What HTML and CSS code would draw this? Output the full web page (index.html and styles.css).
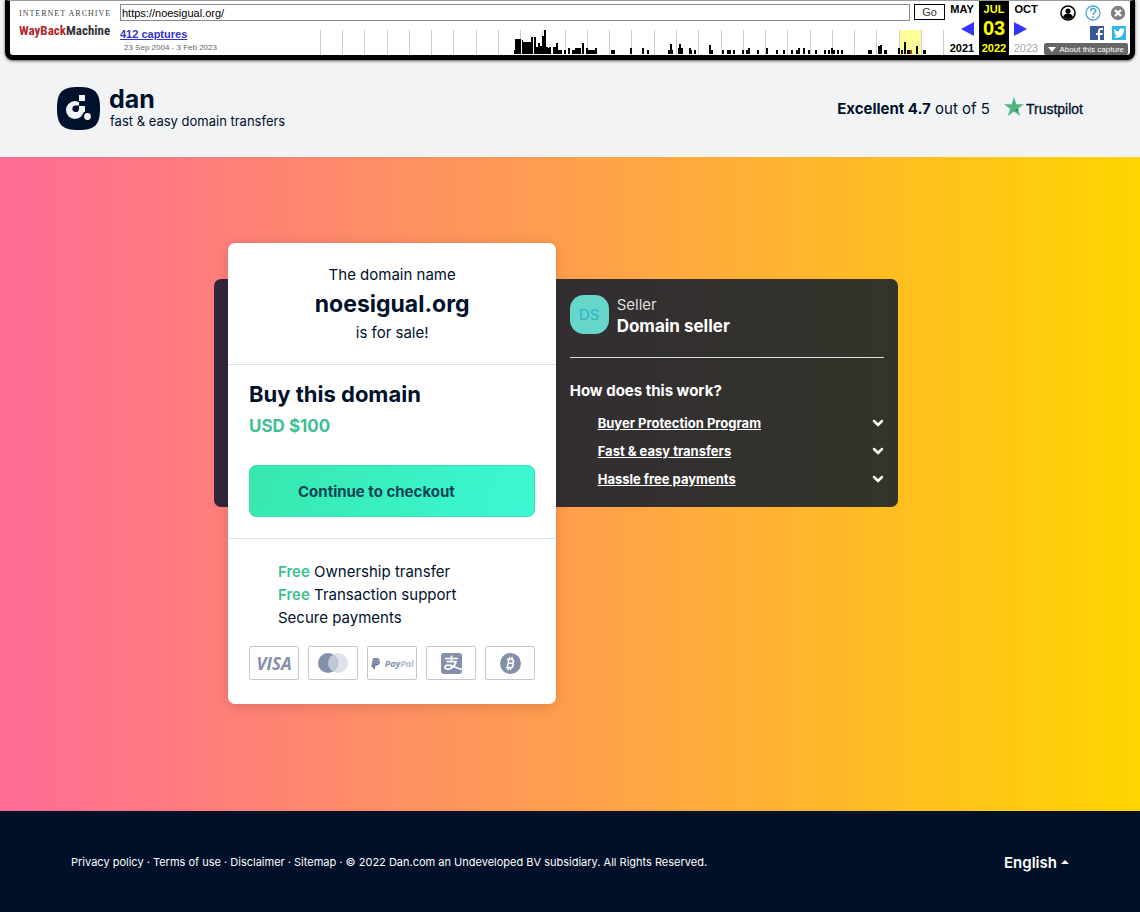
FILE: index.html
```html
<!DOCTYPE html>
<html lang="en">
<head>
    <meta charset="UTF-8">
    <meta name="viewport" content="width=device-width, initial-scale=1.0">
    <title>noesigual.org is for sale</title>
    <link rel="stylesheet" href="styles.css">
</head>
<body>
  <div class="wayback">
    <a class="wb-logo" href="#">
      <span class="wb-small">INTERNET ARCHIVE</span>
      <span class="wb-name"><span class="red">WayBack</span>Machine</span>
    </a>
    <div class="wb-middle">
      <form class="wb-form">
        <input type="text" aria-label="URL" value="https://noesigual.org/">
        <button type="button">Go</button>
      </form>
      <div class="wb-row">
        <div class="captures">
          <a href="#">412 captures</a>
          <span>23 Sep 2004 - 3 Feb 2023</span>
        </div>
        <svg class="spark" viewBox="0 0 625 25" preserveAspectRatio="none">
          <path fill="#ffff99" d="M579 0h22v25h-22z"/>
          <path fill="#ccc" d="M0 0h1v25h-1zM22 0h1v25h-1zM44 0h1v25h-1zM67 0h1v25h-1zM89 0h1v25h-1zM111 0h1v25h-1zM133 0h1v25h-1zM156 0h1v25h-1zM178 0h1v25h-1zM200 0h1v25h-1zM222 0h1v25h-1zM245 0h1v25h-1zM267 0h1v25h-1zM289 0h1v25h-1zM311 0h1v25h-1zM334 0h1v25h-1zM356 0h1v25h-1zM378 0h1v25h-1zM401 0h1v25h-1zM423 0h1v25h-1zM445 0h1v25h-1zM467 0h1v25h-1zM490 0h1v25h-1zM512 0h1v25h-1zM534 0h1v25h-1zM556 0h1v25h-1zM579 0h1v25h-1zM601 0h1v25h-1zM623 0h1v25h-1z"/>
          <path d="M194 24v-4h1v-11h6v15zM202 24v-14h1v2h8v-5h2v17zM214 24v-17h2v10h2v-4h2v3h2v-10h2v-6h2v17h2v1h1v-1h2v7zM233 24v-7h3v-4h2v7h4v4zM244 24v-4h2v4zM248 24v-6h2v6zM252 24v-4h3v-2h6v6zM262 24v-11h2v11zM266 24v-6h2v2h7v-2h2v6zM291 24v-4h4v4z"/>
          <path d="M310 24v-6h2v6zM322 24v-6h2v6zM327 24v-4h2v4zM348 24v-4h2v-6h2v6h1v4zM358 24v-6h1v-4h2v4h2v6zM369 24v-6h2v2h1v4zM374 24v-4h2v4zM389 24v-9h2v5h2v4zM402 24v-4h2v4zM407 24v-4h4v4zM413 24v-4h2v4zM422 24v-4h2v4zM426 24v-4h2v-2h2v6zM437 24v-4h2v4zM446 24v-6h2v6zM456 24v-4h2v4zM463 24v-4h2v4zM471 24v-4h2v4zM476 24v-4h2v-2h2v6zM483 24v-6h2v6zM488 24v-4h2v4zM495 24v-4h2v4zM504 24v-4h2v4zM508 24v-4h2v4zM511 24v-6h2v2h2v4zM517 24v-4h2v4zM521 24v-4h2v4z"/>
          <path d="M548 24v-4h4v4zM558 24v-8h2v-1h2v9zM564 24v-4h3v4zM578 24v-6h2v6zM581 24v-4h2v4zM584 24v-12h2v12zM587 24v-4h3v4zM596 24v-8h2v8zM603 24v-4h3v4z"/>
          <path fill="#c0392b" d="M590 24v-4h2v4z"/>
        </svg>
      </div>
    </div>
    <table class="wb-dates">
      <tr><td>MAY</td><td class="now">JUL</td><td>OCT</td></tr>
      <tr class="day">
        <td class="prev"><svg width="13" height="14" viewBox="0 0 13 14"><path fill="#33f" d="M13 0v14L0 7z"/></svg></td>
        <td class="now">03</td>
        <td class="next"><svg width="13" height="14" viewBox="0 0 13 14"><path fill="#33f" d="M0 0v14l13-7z"/></svg></td>
      </tr>
      <tr><td>2021</td><td class="now">2022</td><td class="off">2023</td></tr>
    </table>
    <div class="wb-tools">
      <div class="tool-row top">
        <svg width="16" height="16" viewBox="0 0 16 16"><circle cx="8" cy="8" r="7" fill="#fff" stroke="#000" stroke-width="1.6"/><circle cx="8" cy="6" r="2.6"/><path d="M3 12c1-3 3-3.500 5-3.500s4 .5 5 3.500c-2.500 2.600-7.500 2.600-10 0z"/></svg>
        <svg width="16" height="16" viewBox="0 0 16 16"><circle cx="8" cy="8" r="7" fill="none" stroke="#4da6dc" stroke-width="1.300"/><path d="M5.500 6.300c0-3.600 5.200-3.400 5.200-.5 0 2-2.600 1.900-2.600 4.200" fill="none" stroke="#4da6dc" stroke-width="1.500"/><circle cx="8.100" cy="12" r="1" fill="#4da6dc"/></svg>
        <svg width="16" height="16" viewBox="0 0 16 16"><circle cx="8" cy="8" r="7.200" fill="#808080"/><path d="M5 5l6 6M11 5l-6 6" stroke="#fff" stroke-width="2.400"/></svg>
      </div>
      <div class="tool-row">
        <svg width="14" height="14" viewBox="0 0 14 14"><path fill="#3b5998" d="M0 0h14v14H0z"/><path fill="#fff" d="M8 14V9H6V7h2V5c0-2 1.200-3 3-3h2v2h-1.500C10.300 4 10 4.300 10 5.300V7h2.800l-.4 2H10v5z"/></svg>
        <svg width="14" height="14" viewBox="0 0 14 14"><path fill="#2fb8e8" d="M0 0h14v14H0z"/><path fill="#fff" d="M2 3c1.300 1.500 3 2.300 5 2.300C6.800 3.300 8 2.200 9.300 2.200c.8 0 1.300.3 1.800.8l1.500-.6-.9 1.400 1.200-.3-1.200 1.300C11.700 8.800 9 11.800 5.300 11.800c-1.400 0-2.700-.4-3.600-1 1.400.1 2.500-.3 3.500-1-1.100-.1-1.900-.7-2.200-1.700h1.100C2.900 7.700 2.200 6.800 2.200 5.700l1 .3C2 5.200 1.700 4 2 3z"/></svg>
      </div>
      <a class="about" href="#"><svg width="8" height="5" viewBox="0 0 8 5"><path fill="#fff" d="M0 0h8L4 5z"/></svg>About this capture</a>
    </div>
  </div>

  <header class="header">
    <a class="brand" href="#">
      <svg width="43" height="43" viewBox="0 0 43 43">
        <path fill="#00112c" d="M21.500 0C38 0 43 5 43 21.500S38 43 21.500 43 0 38 0 21.500 5 0 21.500 0z"/>
        <circle cx="18" cy="23" r="9" fill="#f1f3f6"/>
        <path fill="#00112c" d="M22 13h7v6h-7z"/>
        <path fill="#f1f3f6" d="M22 8h6v6h-6zM22 19h6v6h-6z"/>
        <path fill="#00112c" d="M19 18.500h3V22a3.300 3.300 0 1 1-3-3.500z"/>
        <circle cx="30.500" cy="29.500" r="3.400" fill="#f1f3f6"/>
      </svg>
      <span class="brand-text">
        <span class="brand-name">dan</span>
        <span class="tagline">fast &amp; easy domain transfers</span>
      </span>
    </a>
    <div class="rating">
      <span><b>Excellent 4.7</b> out of 5</span>
      <a class="trustpilot" href="#">
        <svg width="20" height="19" viewBox="0 0 20 19"><path fill="#4fb583" d="M10 0l2.400 7.200H20l-6.100 4.500 2.300 7.200L10 14.500l-6.200 4.400 2.400-7.200L0 7.200h7.600z"/><path fill="#20634d" d="M14.400 13.300l-.5-1.600L10 14.500z"/></svg>
        <span>Trustpilot</span>
      </a>
    </div>
  </header>

  <main class="main">
    <div class="offer">
      <section class="panel">
        <div class="seller">
          <div class="avatar">DS</div>
          <div>
            <div class="seller-label">Seller</div>
            <div class="seller-name">Domain seller</div>
          </div>
        </div>
        <h3>How does this work?</h3>
        <ul class="faq">
          <li><a href="#">Buyer Protection Program</a><svg width="12" height="8" viewBox="0 0 12 8"><path d="M2 2l4 4 4-4" fill="none" stroke="#fff" stroke-width="2.500" stroke-linecap="round"/></svg></li>
          <li><a href="#">Fast &amp; easy transfers</a><svg width="12" height="8" viewBox="0 0 12 8"><path d="M2 2l4 4 4-4" fill="none" stroke="#fff" stroke-width="2.500" stroke-linecap="round"/></svg></li>
          <li><a href="#">Hassle free payments</a><svg width="12" height="8" viewBox="0 0 12 8"><path d="M2 2l4 4 4-4" fill="none" stroke="#fff" stroke-width="2.500" stroke-linecap="round"/></svg></li>
        </ul>
      </section>

      <section class="card">
        <div class="card-title">
          <p>The domain name</p>
          <h1>noesigual.org</h1>
          <p>is for sale!</p>
        </div>
        <div class="card-buy">
          <h2>Buy this domain</h2>
          <div class="price">USD $100</div>
          <button class="checkout" type="button">Continue to checkout</button>
        </div>
        <div class="card-info">
          <ul class="usp">
            <li><b>Free</b> Ownership transfer</li>
            <li><b>Free</b> Transaction support</li>
            <li>Secure payments</li>
          </ul>
          <div class="payments">
            <div class="pay visa">VISA</div>
            <div class="pay"><svg width="32" height="20" viewBox="0 0 32 20"><circle cx="21" cy="10" r="10" fill="#dfe2ea"/><circle cx="11" cy="10" r="10" fill="#8490ab"/><path fill="#c0c7d5" d="M16 1.400a10 10 0 0 1 0 17.200 10 10 0 0 1 0-17.200z"/></svg></div>
            <div class="pay paypal"><svg width="9" height="11" viewBox="0 0 9 11"><path fill="#8490ab" d="M2 0h4c2 0 3 1 2.600 3C8.200 5 7 6 5 6H3.500L3 9H0z"/><path fill="#5c6d8d" d="M8.600 3c.8 3-1 4.500-3.600 4.500H4.300L3.800 11H2l.7-4.500L5 6c2 0 3.200-1 3.600-3z"/></svg><span>Pay<i>Pal</i></span></div>
            <div class="pay"><svg width="21" height="21" viewBox="0 0 21 21"><rect width="21" height="21" rx="3" fill="#8490ab"/><path d="M4 5.500h13M10.500 2.500v6M5.500 8.700h9.500c-.8 3-3 5.300-5 6.500-3 1.900-6.500.8-6-1.300.6-2.600 5-2 8-.6 2.700 1.200 5 2.300 9 3.200" fill="none" stroke="#fff" stroke-width="1.700"/></svg></div>
            <div class="pay"><svg width="21" height="21" viewBox="0 0 21 21"><circle cx="10.500" cy="10.500" r="10.500" fill="#8490ab"/><path d="M8.800 6.300l-1.400 8.400M6.800 6.300h4.700c3 .1 2.600 3.900-.6 3.900H8.500M10.900 10.200c3.600.3 2.700 4.500-.7 4.500H6M10 4l-.4 2M12.300 4l-.4 2.300M8.400 15l-.4 2M10.700 15l-.4 2" fill="none" stroke="#fff" stroke-width="1.600"/></svg></div>
          </div>
        </div>
      </section>
    </div>
  </main>

  <footer class="footer">
    <div class="links">
      <a href="#">Privacy policy</a> · <a href="#">Terms of use</a> · <a href="#">Disclaimer</a> · <a href="#">Sitemap</a> · © 2022 Dan.com an Undeveloped BV subsidiary. All Rights Reserved.
    </div>
    <div class="language">
      <select aria-label="Language">
        <option>English</option>
      </select>
      <svg width="8" height="4" viewBox="0 0 8 4"><path fill="#fff" d="M0 4l4-4 4 4z"/></svg>
    </div>
  </footer>
</body>
</html>
```
FILE: styles.css
```css
*{
  margin: 0;
  padding: 0;
  box-sizing: border-box;
}
body {
  min-height: 100vh;
  display: flex;
  flex-direction: column;
  background-color: #f1f3f5;
  color: #00112c;
  font-family: Inter, sans-serif;
  font-size: 15px;
}
a {
  color: inherit;
  text-decoration: none;
}
ul {
  list-style: none;
}
svg {
  display: block;
  flex-shrink: 0;
}

/* archive toolbar */
.wayback {
  display: flex;
  height: 60px;
  margin: 0 5px;
  padding-left: 9px;
  background-color: white;
  border: 5px solid black;
  border-top: 1px solid #999;
  border-radius: 0 0 8px 8px;
  box-shadow: 0 1px 3px #555;
  font-family: "Liberation Sans", sans-serif;
  color: black;
}
.wb-logo {
  flex: 0 0 101px;
  padding-top: 8px;
}
.wb-small {
  display: block;
  font-family: "Liberation Serif", serif;
  font-size: 8px;
  line-height: 9px;
  letter-spacing: 1px;
  white-space: nowrap;
  color: #444;
}
.wb-name {
  display: block;
  font-family: "Roboto Condensed", "Liberation Sans", sans-serif;
  font-size: 13px;
  font-weight: bold;
  line-height: 26px;
  color: #333;
}
.red {
  color: #b3252b;
}
.wb-middle {
  flex: 1;
  padding-top: 3px;
}
.wb-form {
  display: flex;
  gap: 4px;
}
.wb-form input {
  flex: 1;
  height: 17px;
  padding: 0 1px;
  border: 1px solid #888;
  font: 11px "Liberation Sans", sans-serif;
}
.wb-form button {
  width: 31px;
  height: 16px;
  background-color: white;
  border: 1px solid black;
  font: 11px "Liberation Sans", sans-serif;
  color: #333;
}
.wb-row {
  display: flex;
  margin-top: 9px;
}
.captures {
  width: 200px;
  font-size: 8px;
  color: #666;
}
.captures a {
  display: block;
  font-size: 11px;
  font-weight: bold;
  line-height: 9px;
  color: #33c;
  text-decoration: underline;
}
.captures span {
  display: block;
  padding: 4px 0 0 4px;
}
.spark {
  flex: 1;
  height: 25px;
}
.wb-dates {
  table-layout: fixed;
  width: 98px;
  height: 54px;
  border-collapse: collapse;
  font-size: 11px;
  font-weight: bold;
  text-align: center;
}
.wb-dates td {
  width: 34px;
  height: 16px;
}
.wb-dates .now {
  width: 30px;
  background-color: black;
  color: #ff0;
}
.wb-dates .day td {
  height: 22px;
  font-size: 20px;
}
.wb-dates .off {
  font-weight: normal;
  color: #aaa;
}
.prev svg {
  margin-left: 16px;
}
.next svg {
  margin-left: 5px;
}
.wb-tools {
  display: flex;
  flex-direction: column;
  align-items: flex-end;
  width: 87px;
  padding: 4px 2px 0 0;
}
.tool-row {
  display: flex;
  gap: 8px;
  padding: 5px 2px 3px;
}
.tool-row.top {
  gap: 9px;
  padding: 0 2px 0;
}
.about {
  display: flex;
  align-items: center;
  gap: 4px;
  height: 12px;
  padding: 0 4px;
  background-color: #666;
  border-radius: 2px;
  font-size: 8px;
  white-space: nowrap;
  color: white;
}

.header {
  display: flex;
  justify-content: space-between;
  align-items: center;
  height: 97px;
  padding: 0 57px;
}
.brand {
  display: flex;
  gap: 9px;
}
.brand-text {
  display: flex;
  flex-direction: column;
}
.brand-name {
  font-size: 25px;
  font-weight: bold;
  line-height: 25px;
}
.tagline {
  padding-left: 1px;
  font-size: 13px;
  line-height: 18px;
}
.rating {
  display: flex;
  align-items: center;
  gap: 14px;
}
.trustpilot {
  display: flex;
  gap: 2px;
  font-family: "Liberation Sans", sans-serif;
  font-size: 14px;
  line-height: 24px;
  -webkit-text-stroke: 0.3px #00112c;
}

.main {
  flex: 1;
  padding: 86px 0 107px;
  background: linear-gradient(90deg, #ff6b96, #ff9a55 45%, #ffd500);
}
.offer {
  display: grid;
  grid-template-columns: 48% 1fr;
  width: 60%;
  margin: 0 auto;
}
.card {
  grid-column: 1;
  grid-row: 1;
  background-color: white;
  border-radius: 7px;
  box-shadow: 0 2px 14px rgba(0, 0, 0, .15);
}
/* dark box runs behind the card */
.panel {
  grid-column: 1 / -1;
  grid-row: 1;
  align-self: start;
  margin: 36px 14px 0 -14px;
  padding: 16px 14px 14px 52%;
  background-color: rgba(0, 17, 44, .8);
  border-radius: 7px;
  color: white;
}
.seller {
  display: flex;
  gap: 8px;
  padding-bottom: 20px;
  border-bottom: 1px solid #ddd;
  line-height: 20px;
}
.avatar {
  width: 39px;
  height: 39px;
  background-color: #66d6cb;
  border-radius: 14px;
  line-height: 39px;
  text-align: center;
  color: #2fb3c5;
}
.seller-label {
  color: #ddd;
}
.seller-name {
  font-size: 17px;
  font-weight: bold;
  line-height: 22px;
}
.panel h3 {
  margin-top: 22px;
  font-size: 15px;
  line-height: 22px;
}
.faq {
  margin-top: 7px;
}
.faq li {
  display: flex;
  justify-content: space-between;
  align-items: center;
  padding-left: 28px;
  font-size: 13px;
  font-weight: bold;
  line-height: 28px;
}
.faq a {
  text-decoration: underline;
}

.card-title {
  padding: 18px 24px 17px;
  border-bottom: 1px solid #dfe2e8;
  line-height: 28px;
  text-align: center;
}
.card-title h1 {
  font-size: 23px;
  line-height: 30px;
}
.card-buy {
  padding: 13px 21px 21px;
  border-bottom: 1px solid #dfe2e8;
}
.card-buy h2 {
  font-size: 22px;
  line-height: 32px;
}
.price {
  font-size: 17px;
  font-weight: bold;
  line-height: 32px;
  color: #3fbf92;
}
.checkout {
  width: 100%;
  height: 52px;
  margin-top: 23px;
  padding-left: 48px;
  background: linear-gradient(110deg, #37e8ae, #3cf8d4);
  border: 1px solid #35dfb4;
  border-radius: 7px;
  font: bold 15px Inter, sans-serif;
  text-align: left;
  color: #0c4557;
}
.card-info {
  padding: 21px 21px 24px;
}
.usp {
  padding-left: 29px;
  line-height: 23px;
}
.usp b {
  font-weight: 600;
  color: #3fbf92;
}
.payments {
  display: grid;
  grid-template-columns: repeat(5, 1fr);
  gap: 9px;
  margin-top: 17px;
}
.pay {
  display: flex;
  justify-content: center;
  align-items: center;
  height: 34px;
  border: 1px solid #c4c8d1;
  border-radius: 2px;
  color: #8490ab;
}
.visa {
  font: italic bold 17px "Open Sans", sans-serif;
}
.paypal {
  gap: 5px;
  font: italic bold 9px "Open Sans", sans-serif;
}
.paypal i {
  color: #b4bccb;
}

.footer {
  display: flex;
  justify-content: space-between;
  align-items: center;
  height: 102px;
  padding: 0 71px;
  background-color: #001029;
  color: white;
}
.links {
  font-size: 11px;
}
.language {
  display: flex;
  align-items: center;
  gap: 4px;
}
.language select {
  appearance: none;
  background: none;
  border: none;
  font: 600 15px Inter, sans-serif;
  color: white;
}
```
